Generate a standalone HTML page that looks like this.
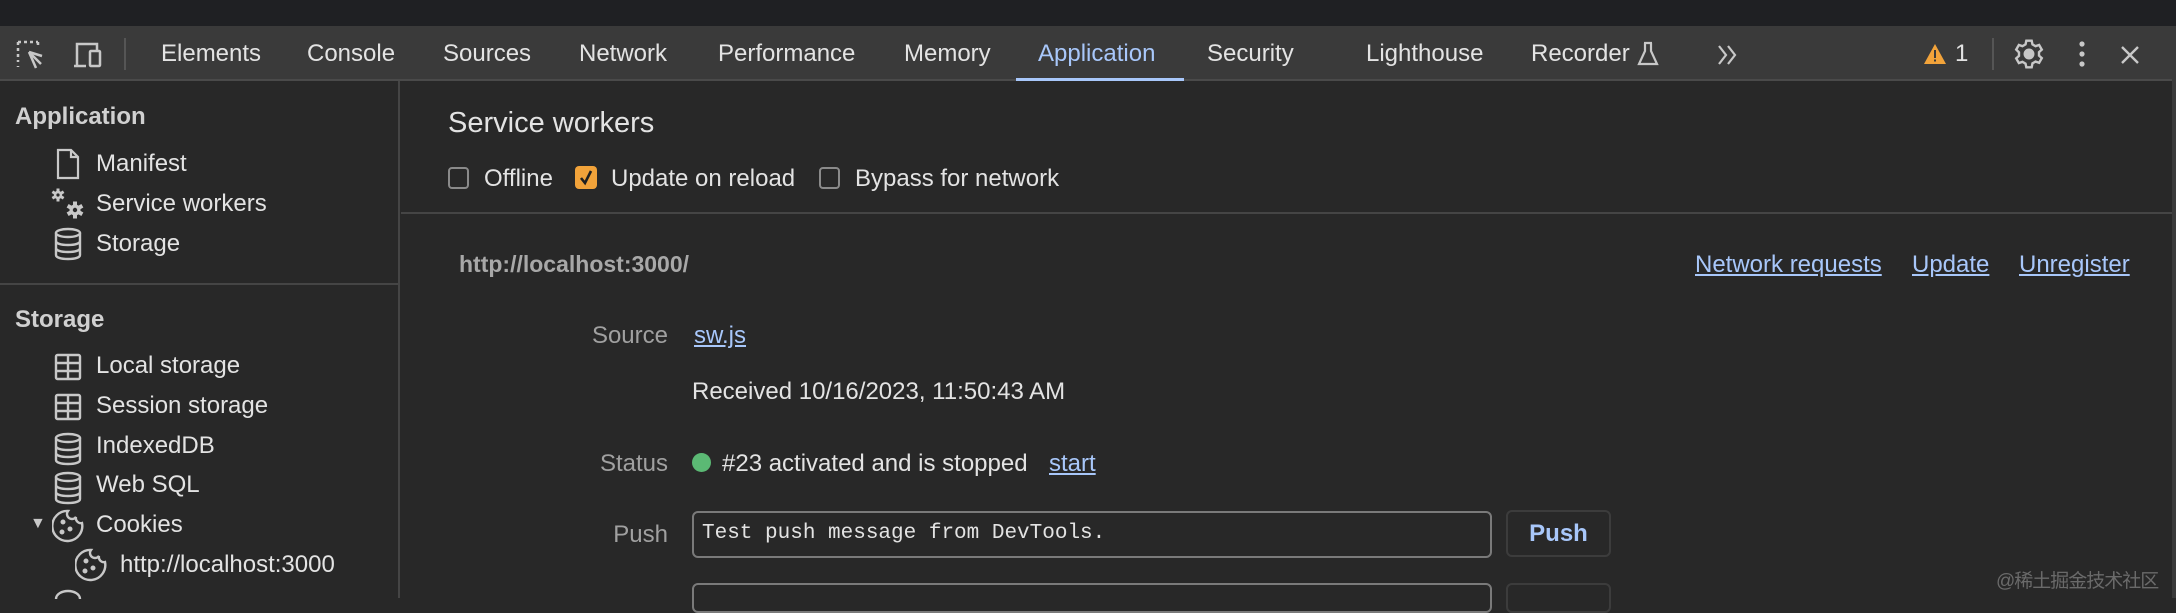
<!DOCTYPE html>
<html><head><meta charset="utf-8"><style>
*{margin:0;padding:0;box-sizing:border-box}
body{width:2176px;height:598px;overflow:hidden;background:#282828;font-family:"Liberation Sans","Noto Sans CJK SC",sans-serif;color:#e3e3e3;position:relative;font-size:24px}
.a{position:absolute;white-space:nowrap}
.top{left:0;top:0;width:2176px;height:26px;background:#1f2023}
.tb{left:0;top:26px;width:2176px;height:55px;background:#3a3a3a;border-bottom:2px solid #4a4a4a}
.tab{top:40px;font-size:24px;color:#e3e3e3}
.side{left:0;top:81px;width:400px;height:517px;border-right:2px solid #454545}
.it{font-size:24px;color:#e3e3e3}
.h{font-size:24px;color:#e3e3e3;font-weight:bold;opacity:.9}
.lab{color:#a0a0a0;text-align:right;width:200px}
.lnk{color:#a8c7fa;text-decoration:underline}
svg{position:absolute}
</style></head><body>
<div class="a top"></div>
<div class="a tb"></div>
<svg style="left:16px;top:40px" width="34" height="30" viewBox="0 0 34 30" fill="none" stroke="#c8c8c8" stroke-width="2.5"><path d="M2 2h20M2 2v20M2 27v-1M22 2v5" stroke-dasharray="3 3"/><path d="M13 12l7 16M13 12l13 4"/><path d="M13 12l12 12"/></svg>
<svg style="left:72px;top:40px" width="34" height="30" viewBox="0 0 34 30" fill="none" stroke="#c8c8c8" stroke-width="2.5"><path d="M5 26V4h20v6"/><path d="M2 26h12"/><rect x="18" y="11" width="10" height="15" rx="1"/></svg>
<div class="a" style="left:124px;top:38px;width:2px;height:32px;background:#555"></div>
<div class="a tab" style="left:161px">Elements</div>
<div class="a tab" style="left:307px">Console</div>
<div class="a tab" style="left:443px">Sources</div>
<div class="a tab" style="left:579px">Network</div>
<div class="a tab" style="left:718px">Performance</div>
<div class="a tab" style="left:904px">Memory</div>
<div class="a tab" style="left:1038px;color:#a8c7fa">Application</div>
<div class="a" style="left:1016px;top:78px;width:168px;height:3px;background:#a8c7fa"></div>
<div class="a tab" style="left:1207px">Security</div>
<div class="a tab" style="left:1366px">Lighthouse</div>
<div class="a tab" style="left:1531px">Recorder</div>
<svg style="left:1636px;top:41px" width="24" height="26" viewBox="0 0 24 26" fill="none" stroke="#c8c8c8" stroke-width="2.2"><path d="M8 2h8M9 2v8L3 23h18L15 10V2"/></svg>
<svg style="left:1716px;top:44px" width="24" height="22" viewBox="0 0 24 22" fill="none" stroke="#c8c8c8" stroke-width="2.2"><path d="M3 2l7 9-7 9M12 2l7 9-7 9"/></svg>
<svg style="left:1923px;top:43px" width="24" height="22" viewBox="0 0 24 22"><path d="M12 1L23 21H1z" fill="#f2a33a"/><rect x="11" y="7" width="2" height="8" fill="#3a3a3a"/><rect x="11" y="16.5" width="2" height="2" fill="#3a3a3a"/></svg>
<div class="a tab" style="left:1955px">1</div>
<div class="a" style="left:1992px;top:38px;width:2px;height:32px;background:#555"></div>
<svg style="left:2013px;top:38px" width="32" height="32" viewBox="0 0 24 24" fill="none" stroke="#c8c8c8" stroke-width="1.8"><circle cx="12" cy="12" r="3.2" fill="#c8c8c8"/><path d="M10 2h4l.6 2.8 2.3 1.3 2.7-.9 2 3.5-2.1 1.9v2.6l2.1 1.9-2 3.5-2.7-.9-2.3 1.3L14 22h-4l-.6-2.8-2.3-1.3-2.7.9-2-3.5 2.1-1.9v-2.6L2.4 8.7l2-3.5 2.7.9 2.3-1.3z"/></svg>
<svg style="left:2076px;top:40px" width="12" height="28" viewBox="0 0 12 28" fill="#c8c8c8"><circle cx="6" cy="4" r="2.6"/><circle cx="6" cy="14" r="2.6"/><circle cx="6" cy="24" r="2.6"/></svg>
<svg style="left:2119px;top:44px" width="22" height="22" viewBox="0 0 22 22" stroke="#c8c8c8" stroke-width="2.4"><path d="M3 3l16 16M19 3L3 19"/></svg>

<div class="a side"></div>
<div class="a h" style="left:15px;top:103px">Application</div>
<svg style="left:55px;top:148px" width="26" height="32" viewBox="0 0 26 32" fill="none" stroke="#c8c8c8" stroke-width="2.2"><path d="M3 2h13l7 7v21H3z"/><path d="M16 2v7h7"/></svg>
<div class="a it" style="left:96px;top:150px">Manifest</div>
<svg style="left:50px;top:187px" width="38" height="34" viewBox="0 0 38 34" fill="#c8c8c8">
<g transform="translate(8,8)"><circle r="4.2"/><rect x="-1.5" y="-6.5" width="3" height="13"/><rect x="-1.5" y="-6.5" width="3" height="13" transform="rotate(60)"/><rect x="-1.5" y="-6.5" width="3" height="13" transform="rotate(120)"/><circle r="1.6" fill="#282828"/></g>
<g transform="translate(25,23)"><circle r="5.5"/><rect x="-2" y="-8.5" width="4" height="17"/><rect x="-2" y="-8.5" width="4" height="17" transform="rotate(60)"/><rect x="-2" y="-8.5" width="4" height="17" transform="rotate(120)"/><circle r="2.2" fill="#282828"/></g></svg>
<div class="a it" style="left:96px;top:190px">Service workers</div>
<svg style="left:53px;top:227px" width="30" height="34" viewBox="0 0 30 34" fill="none" stroke="#c8c8c8" stroke-width="2.4"><ellipse cx="15" cy="6" rx="12" ry="4"/><path d="M3 6v22c0 2.5 5 4 12 4s12-1.5 12-4V6M3 14c0 2.5 5 4 12 4s12-1.5 12-4M3 21c0 2.5 5 4 12 4s12-1.5 12-4"/></svg>
<div class="a it" style="left:96px;top:230px">Storage</div>
<div class="a" style="left:0;top:283px;width:400px;height:2px;background:#454545"></div>
<div class="a h" style="left:15px;top:306px">Storage</div>
<svg style="left:54px;top:353px" width="28" height="28" viewBox="0 0 28 28" fill="none" stroke="#c8c8c8" stroke-width="2.4"><rect x="2" y="2" width="24" height="24" rx="1.5"/><path d="M2 10h24M2 18h24M14 2v24"/></svg>
<div class="a it" style="left:96px;top:352px">Local storage</div>
<svg style="left:54px;top:393px" width="28" height="28" viewBox="0 0 28 28" fill="none" stroke="#c8c8c8" stroke-width="2.4"><rect x="2" y="2" width="24" height="24" rx="1.5"/><path d="M2 10h24M2 18h24M14 2v24"/></svg>
<div class="a it" style="left:96px;top:392px">Session storage</div>
<svg style="left:53px;top:432px" width="30" height="34" viewBox="0 0 30 34" fill="none" stroke="#c8c8c8" stroke-width="2.4"><ellipse cx="15" cy="6" rx="12" ry="4"/><path d="M3 6v22c0 2.5 5 4 12 4s12-1.5 12-4V6M3 14c0 2.5 5 4 12 4s12-1.5 12-4M3 21c0 2.5 5 4 12 4s12-1.5 12-4"/></svg>
<div class="a it" style="left:96px;top:432px">IndexedDB</div>
<svg style="left:53px;top:471px" width="30" height="34" viewBox="0 0 30 34" fill="none" stroke="#c8c8c8" stroke-width="2.4"><ellipse cx="15" cy="6" rx="12" ry="4"/><path d="M3 6v22c0 2.5 5 4 12 4s12-1.5 12-4V6M3 14c0 2.5 5 4 12 4s12-1.5 12-4M3 21c0 2.5 5 4 12 4s12-1.5 12-4"/></svg>
<div class="a it" style="left:96px;top:471px">Web SQL</div>
<div class="a" style="left:30px;top:515px;font-size:16px;color:#c8c8c8">&#9660;</div>
<svg style="left:52px;top:509px" width="32" height="34" viewBox="0 0 32 34" fill="none" stroke="#c8c8c8" stroke-width="2.4"><path d="M16 2a15 15 0 1 0 14 12 5 5 0 0 1-6-6 5 5 0 0 1-8-6z"/><circle cx="11" cy="13" r="1.3" fill="#c8c8c8"/><circle cx="18" cy="20" r="1.3" fill="#c8c8c8"/><circle cx="10" cy="23" r="1.3" fill="#c8c8c8"/></svg>
<div class="a it" style="left:96px;top:511px">Cookies</div>
<svg style="left:75px;top:548px" width="32" height="34" viewBox="0 0 32 34" fill="none" stroke="#c8c8c8" stroke-width="2.4"><path d="M16 2a15 15 0 1 0 14 12 5 5 0 0 1-6-6 5 5 0 0 1-8-6z"/><circle cx="11" cy="13" r="1.3" fill="#c8c8c8"/><circle cx="18" cy="20" r="1.3" fill="#c8c8c8"/><circle cx="10" cy="23" r="1.3" fill="#c8c8c8"/></svg>
<div class="a it" style="left:120px;top:551px">http://localhost:3000</div>
<svg style="left:53px;top:589px" width="30" height="12" viewBox="0 0 30 12" fill="none" stroke="#c8c8c8" stroke-width="2.4"><path d="M3 10c0-5 6-8 12-8s12 3 12 8"/></svg>

<div class="a" style="left:448px;top:107px;font-size:29px;color:#e3e3e3">Service workers</div>
<div class="a" style="left:448px;top:167px;width:21px;height:22px;border:2px solid #8a8a8a;border-radius:4px"></div>
<div class="a it" style="left:484px;top:165px">Offline</div>
<div class="a" style="left:575px;top:166px;width:22px;height:23px;background:#f2a33a;border-radius:4px"></div>
<svg style="left:578px;top:168px" width="16" height="18" viewBox="0 0 16 18" fill="none" stroke="#202020" stroke-width="2.6"><path d="M3 10l4 5 6-12"/></svg>
<div class="a it" style="left:611px;top:165px">Update on reload</div>
<div class="a" style="left:819px;top:167px;width:21px;height:22px;border:2px solid #8a8a8a;border-radius:4px"></div>
<div class="a it" style="left:855px;top:165px">Bypass for network</div>
<div class="a" style="left:401px;top:212px;width:1775px;height:2px;background:#454545"></div>
<div class="a" style="left:459px;top:251px;font-size:23px;font-weight:bold;color:#a8a8a8">http://localhost:3000/</div>
<div class="a lnk" style="left:1695px;top:251px">Network requests</div>
<div class="a lnk" style="left:1912px;top:251px">Update</div>
<div class="a lnk" style="left:2019px;top:251px">Unregister</div>
<div class="a lab" style="left:468px;top:322px">Source</div>
<div class="a lnk" style="left:694px;top:322px">sw.js</div>
<div class="a it" style="left:692px;top:378px">Received 10/16/2023, 11:50:43 AM</div>
<div class="a lab" style="left:468px;top:450px">Status</div>
<div class="a" style="left:692px;top:453px;width:19px;height:19px;border-radius:50%;background:#5bb974"></div>
<div class="a it" style="left:722px;top:450px">#23 activated and is stopped</div>
<div class="a lnk" style="left:1049px;top:450px">start</div>
<div class="a lab" style="left:468px;top:521px">Push</div>
<div class="a" style="left:692px;top:511px;width:800px;height:47px;border:2px solid #7a7a7a;border-radius:6px"></div>
<div class="a" style="left:702px;top:522px;font-family:'Liberation Mono',monospace;font-size:21px;color:#e3e3e3">Test push message from DevTools.</div>
<div class="a" style="left:1506px;top:510px;width:105px;height:47px;border:2px solid #3c3c3c;border-radius:6px;color:#a8c7fa;font-weight:bold;text-align:center;line-height:43px">Push</div>
<div class="a" style="left:692px;top:583px;width:800px;height:30px;border:2px solid #7a7a7a;border-radius:6px"></div>
<div class="a" style="left:1506px;top:583px;width:105px;height:30px;border:2px solid #3c3c3c;border-radius:6px"></div>
<div class="a" style="left:1996px;top:566px;font-size:19px;color:#6a6a6a;letter-spacing:-1px">@稀土掘金技术社区</div>
<div class="a" style="left:2172px;top:26px;width:4px;height:572px;background:#3a3a3a"></div>
</body></html>
